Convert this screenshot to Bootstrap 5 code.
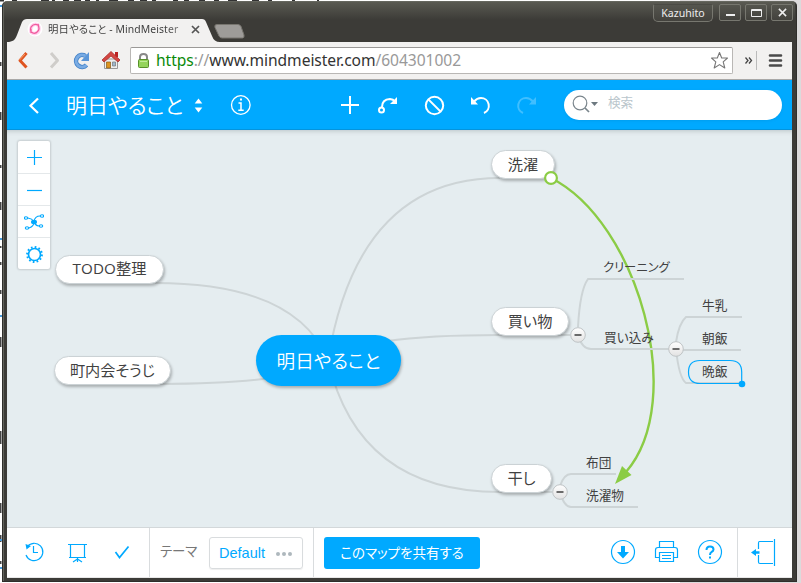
<!DOCTYPE html>
<html lang="ja">
<head>
<meta charset="utf-8">
<meta name="viewport" content="width=device-width, initial-scale=1">
<title>明日やること - MindMeister</title>
<link href="https://cdn.jsdelivr.net/npm/bootstrap@5.3.0/dist/css/bootstrap.min.css" rel="stylesheet">
<style>
  :root { --mm: #00a9ff; --line: #cdd4d6; --ink: #414141; }
  html, body { height: 583px; overflow: hidden; }
  body { background: linear-gradient(90deg, #fff 0 680px, #dcdadb 680px); font-family: "Noto Sans", "Noto Sans CJK JP", sans-serif; color: var(--ink); line-height: 1; }
  svg { display: block; flex: none; }
  .jp { font-family: "Noto Sans CJK JP", sans-serif; font-feature-settings: "palt"; white-space: nowrap; }
  .specks { left: 0; top: 0; }
  .win { width: 795px; height: 581px; margin: 1px 0 0 2px; padding: 0 4px 3px; background: #3c3b37; border: 1px solid #2f2e2b; border-top-color: #66675f; border-radius: 5px 5px 0 0; position: relative; box-shadow: inset 1px 0 #62635c; }
  .win > div { flex: none; }
  .titlebar { height: 40px; background: linear-gradient(#5a5a52, #3c3b37 18px); margin: 0 -3px; padding-left: 3px; }
  .tabshape { width: 207px; height: 24px; margin-top: 16px; position: relative; }
  .tabshape > svg { position: absolute; left: 0; top: 0; }
  .tablabel { position: relative; padding: 3px 0 0 20px; height: 19px; }
  .tabtext { font-family: "Noto Sans", "Noto Sans CJK JP", sans-serif; font-size: 10.4px; margin-left: 5px; width: 143px; line-height: 16px; letter-spacing: .09px; -webkit-mask-image: linear-gradient(90deg, #000 118px, #0009 132px); }
  .newtab { margin: 21px 0 0 0; }
  .wbtn { height: 17px; width: 22px; border: 1px solid #77776f; border-radius: 2px; color: #eee; background: linear-gradient(#55554e, #43423d); }
  .wname { width: 60px; height: 18px; font-size: 10.6px; border-radius: 2px 2px 5px 5px; border-top-color: #4b4b45; margin-right: 2px; }
  .winctl { gap: 4px; padding: 2px 2px 0 0; }
  .chromebar { height: 38px; background: #f2f1f0; border-bottom: 1px solid #a9a8a7; }
  .urlbox { width: 603px; height: 27px; background: #fff; border: 1px solid #b9b7b5; border-top-color: #9b9997; border-radius: 2px; padding: 0 3px 0 6px; }
  .urltext { font-family: "Noto Sans"; font-size: 15.6px; letter-spacing: -.05px; white-space: nowrap; margin-left: 6px; line-height: 24px; padding-bottom: 1px; color: #333; }
  .https { color: #0a8a0a; } .dim { color: #999; }
  .appbar { height: 50px; background: var(--mm); color: #fff; border-bottom: 1px solid #0594dd; }
  .maptitle { font-size: 21px; font-weight: 350; width: 121px; line-height: 30px; padding-bottom: 2px; margin-left: -1px; margin-right: 1px; }
  .searchbox { width: 218px; height: 30px; border-radius: 15px; background: #fff; color: #bac6cc; font-size: 12.6px; margin-right: 10px; padding-left: 8px; box-shadow: 0 1px 3px #0089d055; }
  .stage { height: 397px; background: #e5edf0; box-shadow: inset 0 4px 5px -3px #b9c3c7; position: relative; overflow: hidden; }
  .stage > svg { position: absolute; left: 0; top: 0; }
  .tools { position: absolute; left: 11px; top: 11px; width: 32px; height: 128px; background: #fff; border-radius: 2px; box-shadow: 0 0 2px 1px #0002; }
  .tools > div { height: 32px; padding-top: 1px; border-bottom: 1px solid #e4e8ea; }
  .tools > div:first-child { height: 33px; } .tools > div:last-child { border: 0; height: 31px; }
  .topic { position: absolute; height: 29px; padding-bottom: 2px; border-radius: 15px; background: #fff; border: 1px solid #cbd2d5; box-shadow: 1px 2px 3px #0004; font-size: 15.2px; }
  .t1 { left: 484px; top: 20px; width: 64px; } .t2 { left: 484px; top: 177px; width: 78px; } .t3 { left: 484px; top: 334px; width: 61px; }
  .t4 { left: 48px; top: 125px; width: 109px; letter-spacing: .1px; font-family: "Open Sans", "Noto Sans CJK JP", sans-serif; } .t5 { left: 47px; top: 226px; width: 117px; }
  .rootnode { left: 249px; top: 205px; width: 145px; height: 51px; border: 0; border-radius: 26px; background: var(--mm); color: #fff; font-size: 18.6px; font-weight: 350; padding-bottom: 0; }
  .leaf { position: absolute; font-size: 12.7px; line-height: 18px; }
  .l1 { left: 596px; top: 128px; font-size: 12.3px; } .l2 { left: 597px; top: 198px; } .l3 { left: 695px; top: 166px; } .l4 { left: 695px; top: 199px; } .l5 { left: 695px; top: 232px; } .l6 { left: 579px; top: 323px; } .l7 { left: 579px; top: 356px; }
  .footbar { height: 51px; background: #fff; border-top: 1px solid #d3d8da; border-bottom: 1px solid #e8e8e8; }
  .vsep { border-right: 1px solid #d9dcde; }
  .themearea { width: 164px; }
  .themename { font-size: 13.4px; color: #777; width: 49px; margin-left: 10px; }
  .themepick { width: 94px; height: 32px; border: 1px solid #d9dcde; border-radius: 3px; color: var(--mm); font: 14.5px "Liberation Sans", sans-serif; box-shadow: 0 1px 1px #0001; padding: 0 9px; }
  .sharebtn, .sharebtn:hover { width: 156px; height: 32px; border-radius: 3px; background: var(--mm); color: #fff; font-size: 13.5px; padding: 0; border: 0; line-height: 31px; margin-left: 10px; }
</style>
<script src="https://cdn.jsdelivr.net/npm/bootstrap@5.3.0/dist/js/bootstrap.bundle.min.js"></script>
</head>
<body>
<svg class="specks position-absolute" width="801" height="583" fill="none">
  <path stroke="#333" d="M0 .5h4m8 0h5m24 0h8m3 0h3m8 0h6m5 0h7m4 0h5m6 0h3m10 0h9m10 0h6m6 0h7m5 0h4m17 0h5m6 0h5m10 0h6m9 0h5m9 0h9m15 0h7m9 0h4m20 0h3m22 0h2" stroke-width="2"/>
  <path stroke="#444" d="M.5 62v4M.5 112v8M.5 165v3M.5 202v8M.5 246v2M.5 262v3M.5 290v4M.5 337v10M.5 431v13M.5 503v10M.5 535v7M.5 561v3" stroke-width="2"/>
  <path stroke="#4a9ddd" d="M0 6h2M0 239h2M0 316h2M0 540h2M0 568h2" stroke-width="2"/>
</svg>
<div class="win d-flex flex-column">
  <div class="titlebar d-flex align-items-start">
    <div class="tabshape">
      <svg width="214" height="24"><path fill="#f2f1f0" d="M0 24C6 24 8 22 10 17L15 4Q16.500 1 20 1H195Q198 1 199 4L205 18Q207 24 213 24Z"/></svg>
      <div class="tablabel d-flex align-items-center">
        <svg width="16" height="16" viewBox="0 0 16 16"><circle cx="8" cy="8" r="7.500" fill="#fff"/><path fill="none" stroke="#f2a" stroke-opacity=".2" stroke-width="3.500" d="M5 5Q8 2 11 4Q13 8 11 11Q7 14 4 11Q3 8 5 5Z"/><path fill="none" stroke="#f15b9d" stroke-width="1.300" d="M4 6Q7 2 11 4Q13 8 11 10Q8 14 4 11Q3 8 4 6M11 3L12 7M4 8L4 12"/></svg>
        <div class="jp tabtext">明日やること - MindMeister</div>
        <svg width="9" height="9" viewBox="0 0 9 9"><path stroke="#555" stroke-width="1.700" d="M1 1L8 8M8 1L1 8"/></svg>
      </div>
    </div>
    <svg class="newtab" width="32" height="16"><path fill="#9e9c99" stroke="#77756f" d="M3 1.500H24Q26 1.500 27 3.500L30 12Q30.500 15 28.500 15H8Q6 15 5 13L1 4.500Q0 1.500 3 1.500Z"/></svg>
    <div class="winctl d-flex ms-auto">
      <div class="wbtn wname d-flex align-items-center justify-content-center">Kazuhito</div>
      <div class="wbtn d-flex align-items-center justify-content-center"><svg width="11" height="10"><path stroke="#eee" stroke-width="2" d="M1 7H10"/></svg></div>
      <div class="wbtn d-flex align-items-center justify-content-center"><svg width="11" height="10"><path fill="none" stroke="#eee" d="M.5 1.500H10.500V8.500H.5ZM1 2.500H10"/></svg></div>
      <div class="wbtn d-flex align-items-center justify-content-center"><svg width="9" height="9" viewBox="0 0 10 10"><path stroke="#eee" stroke-width="1.700" d="M1 1L9 9M9 1L1 9"/></svg></div>
    </div>
  </div>
  <div class="chromebar d-flex align-items-center">
    <svg width="123" height="38" viewBox="7 42 123 38">
      <path fill="none" stroke="#df5420" stroke-width="3" stroke-linejoin="round" d="M26.500 53L20 60.500L26.500 67.500"/><path fill="none" stroke="#f79a62" d="M25 54L19.500 60"/>
      <path fill="none" stroke="#cfcdca" stroke-width="3" stroke-linejoin="round" d="M51 53L57.500 60.500L51 67.500"/>
      <path fill="none" stroke="#3f7fc6" stroke-width="4.500" d="M86.500 65A6 6 0 1 1 85.500 56"/><path fill="none" stroke="#79abe3" stroke-width="3" d="M86.500 65A6 6 0 1 1 85.500 56"/><path fill="#5b96d8" d="M89 52V61H81Z"/>
      <path fill="#eee" stroke="#999" d="M104.500 59H117.500V68.500H104.500Z"/><path fill="#dc9420" stroke="#8a5a13" stroke-width=".7" d="M106.500 62H110.500V68H106.500Z"/><path fill="#9db9cf" stroke="#777" stroke-width=".7" d="M112.500 62H115.500V66H112.500Z"/><path fill="#b22" d="M115 52H118V57H115Z"/><path fill="#d44742" stroke="#a92f2d" stroke-width=".8" d="M111 51.500L120 60L118 62L111 56L104 62L102 60Z"/>
    </svg>
    <div class="urlbox d-flex align-items-center">
      <svg width="13" height="17" viewBox="0 0 13 17"><path fill="none" stroke="#888" stroke-width="2" d="M3 8V5Q3 2 6.500 2Q10 2 10 5V8"/><rect x="1.500" y="7.500" width="10" height="8" rx="1" fill="#94d45b" stroke="#57902a"/><path stroke="#c0eb98" d="M3 9.500H10"/></svg>
      <div class="urltext"><span class="https">https</span><span class="dim">://</span>www.mindmeister.com<span class="dim">/604301002</span></div>
      <svg class="ms-auto" width="19" height="19" viewBox="0 0 19 19"><path fill="#fff" stroke="#777" stroke-width="1.100" stroke-linejoin="round" d="M9.500 1.500L11.700 7H17.500L13.200 10.800L14.800 17L9.500 13.600L4.200 17L5.800 10.800L1.500 7H7.300Z"/></svg>
    </div>
    <svg width="59" height="38" viewBox="733 42 59 38"><path fill="none" stroke="#444" stroke-width="1.300" d="M745.500 57.500L748 60.500L745.500 63.500M749 57.500L751.500 60.500L749 63.500"/><path stroke="#bbb" d="M756.500 51V70"/><path stroke="#4a4a4a" stroke-width="2.600" stroke-linecap="round" d="M770 55.500H781M770 60.500H781M770 65.500H781"/></svg>
  </div>
  <div class="appbar d-flex align-items-center">
    <svg width="60" height="49" viewBox="7 80 60 49"><path fill="none" stroke="#fff" stroke-width="2.200" d="M38 98.500L30.500 105.800L38 113"/></svg>
    <div class="maptitle jp">明日やること</div>
    <svg width="376" height="49" viewBox="188 80 376 49" fill="none" stroke="#fff" stroke-width="2">
      <path fill="#fff" stroke="none" d="M198.500 98.500L202.300 103.500H194.700ZM198.500 112.500L202.300 107.500H194.700Z"/>
      <circle cx="240.800" cy="105" r="9.300" stroke-width="1.300"/><path stroke-width="1.500" d="M238.500 103H241V110M238.300 110.300H243.700"/><path d="M240 99.500H242"/>
      <path d="M341 105H359M350 96V114"/>
      <circle cx="381.500" cy="110" r="2.500"/><path d="M382 107Q382 99.500 390 99Q393 99 395.500 102"/><path fill="#fff" stroke="none" d="M397 97V104H390Z"/>
      <circle cx="434.500" cy="105.500" r="8.700"/><path stroke-width="1.800" d="M428.500 99.500L440.500 111.500"/>
      <path d="M474 101.500Q477 98 481 98A7.800 7.800 0 0 1 484 113"/><path fill="#fff" stroke="none" d="M471 97V104.500H478Z"/>
      <g opacity=".25"><path d="M533 101.500Q530 98 526 98A7.800 7.800 0 0 0 523 113"/><path fill="#fff" stroke="none" d="M536 97V104.500H529Z"/></g>
    </svg>
    <div class="searchbox d-flex align-items-center">
      <svg width="36" height="24" viewBox="572 93 36 24" fill="none" stroke="#7a858c"><circle cx="580" cy="103" r="6.800" stroke-width="1.200"/><path stroke-width="1.700" d="M585 108L589 112"/><path fill="#6d7980" stroke="none" d="M591 102H598L594.500 106Z"/></svg>
      <span class="jp pb-1">検索</span>
    </div>
  </div>
  <div class="stage">
    <svg width="785" height="397" viewBox="7 130 785 397" fill="none" stroke="#cdd4d6" stroke-width="2">
      <path stroke="#8bcc45" stroke-width="2.400" d="M551 178C638 222 688 400 626 472"/>
      <path d="M328 360Q358 178 500 178M328 360Q358 335 500 335H570M328 360Q358 492 500 492H552M328 360Q296 283 155 283M328 360Q298 384 160 384"/>
      <path d="M578 327Q580 290 588 279H684M578 335Q582 349 591 349H670M676 342Q679 323 686 317H742M682 350H741M676 349Q679 378 686 383H742"/>
      <path d="M560 486Q564 474 571 474H616M560 492Q564 507 571 507H638"/>
      <path fill="#8bcc45" stroke="none" d="M615 484L622 466L631.500 475Z"/>
      <path stroke="#00a9ff" stroke-width="1.200" d="M742 383.500H700Q688.500 383.500 688.500 372Q688.500 360.500 700 360.500H730Q741.700 360.500 741.700 372V383"/><circle cx="742" cy="384" r="3.300" fill="#00a9ff" stroke="none"/>
    </svg>
    <div class="tools">
      <div class="d-flex align-items-center justify-content-center"><svg width="17" height="17"><path stroke="#00a9ff" stroke-width="1.200" d="M1 8.500H16M8.500 1V16"/></svg></div>
      <div class="d-flex align-items-center justify-content-center"><svg width="17" height="17"><path stroke="#00a9ff" stroke-width="1.200" d="M1 8.500H16"/></svg></div>
      <div class="d-flex align-items-center justify-content-center"><svg width="20" height="18" viewBox="24 213.500 20 18" fill="none" stroke="#00a9ff" stroke-width="1.100"><ellipse cx="26" cy="218.500" rx="1.700" ry="1.200"/><ellipse cx="42" cy="216.500" rx="1.700" ry="1.200"/><ellipse cx="27" cy="228.500" rx="1.700" ry="1.200"/><ellipse cx="41" cy="226.500" rx="1.700" ry="1.200"/><path d="M28 218.500Q32 219 34 222Q35 216.500 40 216.500M29 228.500Q34 227 34 222Q35 226 39 226.500"/><ellipse cx="34" cy="222.500" rx="3" ry="2.200" fill="#00a9ff" stroke="none"/></svg></div>
      <div class="d-flex align-items-center justify-content-center"><svg width="18" height="18" viewBox="-9.500 -9.500 18 18" fill="none" stroke="#00a9ff"><circle r="6" stroke-width="1.700"/><circle r="7.400" stroke-width="2" stroke-dasharray="1.700 2.174"/></svg></div>
    </div>
    <div class="topic jp t1 d-flex align-items-center justify-content-center">洗濯</div>
    <div class="topic jp t2 d-flex align-items-center justify-content-center">買い物</div>
    <div class="topic jp t3 d-flex align-items-center justify-content-center">干し</div>
    <div class="topic jp t4 d-flex align-items-center justify-content-center">TODO整理</div>
    <div class="topic jp t5 d-flex align-items-center justify-content-center">町内会そうじ</div>
    <div class="topic rootnode jp d-flex align-items-center justify-content-center">明日やること</div>
    <div class="leaf jp l1">クリーニング</div>
    <div class="leaf jp l2">買い込み</div>
    <div class="leaf jp l3">牛乳</div>
    <div class="leaf jp l4">朝飯</div>
    <div class="leaf jp l5">晩飯</div>
    <div class="leaf jp l6">布団</div>
    <div class="leaf jp l7">洗濯物</div>
    <svg width="785" height="397" viewBox="7 130 785 397">
      <defs><linearGradient id="knob" x2="0" y2="1"><stop stop-color="#fff"/><stop offset="1" stop-color="#e2e2e2"/></linearGradient></defs>
      <circle cx="551" cy="178" r="5.900" fill="#fff" stroke="#8bcc45" stroke-width="2.200"/>
      <g fill="url(#knob)" stroke="#bfc4c6"><circle cx="578" cy="335" r="7.300"/><circle cx="676" cy="349" r="7.300"/><circle cx="560" cy="492" r="7.300"/></g>
      <path stroke="#6a6a6a" stroke-width="2" d="M574.500 335H581.500M672.500 349H679.500M556.500 492H563.500"/>
    </svg>
  </div>
  <div class="footbar d-flex align-items-center">
    <div class="vsep h-100"><svg width="142" height="49" viewBox="7 528 142 49" fill="none" stroke="#00a9ff" stroke-width="1.200">
      <path d="M27 547A8.700 8.700 0 1 1 26 555"/><path fill="#00a9ff" stroke="none" d="M25.500 544L26.500 549.500L31 546Z"/><path d="M33.500 546V552.500H38"/>
      <path d="M68 544.500H87M70.500 544.500V557.500H84.500V544.500M69 557.500H86M77.500 558V562M73 562L77.500 559L82 562"/>
      <path stroke-width="1.700" d="M115.500 552L119.500 557.500L128.500 546.500"/>
    </svg></div>
    <div class="vsep h-100 d-flex align-items-center themearea">
      <span class="jp themename pb-1">テーマ</span>
      <div class="themepick d-flex align-items-center justify-content-between"><span>Default</span><svg width="18" height="6"><g fill="#aeb8bd"><circle cx="3" cy="4" r="2"/><circle cx="9" cy="4" r="2"/><circle cx="15" cy="4" r="2"/></g></svg></div>
    </div>
    <button class="btn sharebtn jp">このマップを共有する</button>
    <div class="vsep h-100 ms-auto"><svg width="137" height="49" viewBox="600 528 137 49" fill="none" stroke="#00a9ff" stroke-width="1.200">
      <circle cx="623" cy="552" r="11.500"/><path fill="#00a9ff" stroke="none" d="M621 546H625V552H629L623 558.500L617 552H621Z"/>
      <path d="M659.500 547V541.500H673.500V547M659 557.500H655.500V550Q655.500 547.500 658 547.500H675Q677.500 547.500 677.500 550V557.500H674M659.500 552.500H673.500V561.500H659.500ZM662 555.500H671M662 558.500H671"/>
      <circle cx="710" cy="552" r="11.500"/><path stroke-width="2" d="M706.500 550Q706.500 546.500 710 546.500Q713.500 546.500 713.500 549.500Q713.500 551 711.500 552Q710 553 710 555M710 556.500V558.500"/>
    </svg></div>
    <svg width="54" height="49" viewBox="738 528 54 49" fill="none" stroke="#00a9ff" stroke-width="1.200"><path d="M774.500 539V566M773 541.500H759.500Q758.500 541.500 758.500 543V549M758.500 555V562Q758.500 563.500 760 563.500H773"/><path fill="#00a9ff" stroke="none" d="M751 552.500L756 549V551.300H759.500V553.700H756V556Z"/></svg>
  </div>
</div>
</body>
</html>
